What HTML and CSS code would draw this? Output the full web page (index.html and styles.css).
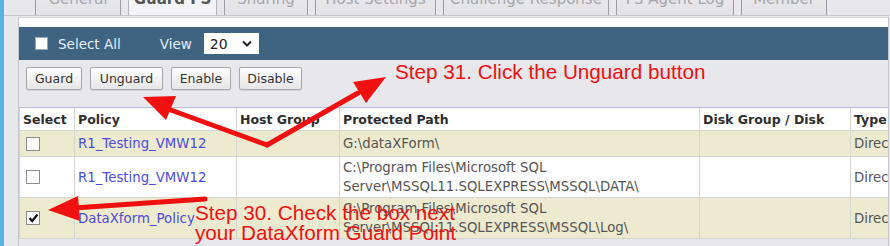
FILE: index.html
```html
<!DOCTYPE html>
<html lang="en">
<head>
    <meta charset="UTF-8">
    <title>Guard FS</title>
    <link rel="stylesheet" href="styles.css">
</head>
<body>
    <div class="frame">
        <div class="edge"></div>

        <div class="content">
            <!-- Tabs -->
            <div class="tabs">
                <div class="tab t-general">General</div>
                <div class="tab t-guard active">Guard FS</div>
                <div class="tab t-sharing">Sharing</div>
                <div class="tab t-host">Host Settings</div>
                <div class="tab t-challenge">Challenge Response</div>
                <div class="tab t-log">FS Agent Log</div>
                <div class="tab t-member">Member</div>
            </div>

            <div class="panel">
                <div class="strip"></div>

                <!-- Header bar -->
                <div class="bar">
                    <label class="select-all"><span class="box"></span>Select All</label>
                    <span class="view-label">View</span>
                    <div class="view-select">
                        <span>20</span>
                        <svg width="10" height="7" viewBox="0 0 10 7"><path d="M1 1.5 L5 5.5 L9 1.5" fill="none" stroke="#222" stroke-width="2"/></svg>
                    </div>
                </div>

                <!-- Buttons -->
                <div class="toolbar">
                    <button class="btn b-guard">Guard</button>
                    <button class="btn b-unguard">Unguard</button>
                    <button class="btn b-enable">Enable</button>
                    <button class="btn b-disable">Disable</button>
                </div>

                <!-- Guard points -->
                <table class="grid">
                    <colgroup>
                        <col class="c-select">
                        <col class="c-policy">
                        <col class="c-host">
                        <col class="c-path">
                        <col class="c-disk">
                        <col class="c-type">
                    </colgroup>
                    <thead>
                        <tr>
                            <th>Select</th>
                            <th>Policy</th>
                            <th>Host Group</th>
                            <th>Protected Path</th>
                            <th>Disk Group / Disk</th>
                            <th>Type</th>
                        </tr>
                    </thead>
                    <tbody>
                        <tr class="odd short">
                            <td><span class="check"></span></td>
                            <td><a href="#">R1_Testing_VMW12</a></td>
                            <td></td>
                            <td>G:\dataXForm\</td>
                            <td></td>
                            <td>Directory</td>
                        </tr>
                        <tr class="even">
                            <td><span class="check"></span></td>
                            <td><a href="#">R1_Testing_VMW12</a></td>
                            <td></td>
                            <td>C:\Program Files\Microsoft SQL<br>Server\MSSQL11.SQLEXPRESS\MSSQL\DATA\</td>
                            <td></td>
                            <td>Directory</td>
                        </tr>
                        <tr class="odd">
                            <td><span class="check checked">
                                <svg width="11" height="10" viewBox="0 0 11 10"><path d="M1.5 5 L4.2 8 L9.5 1.5" fill="none" stroke="#111" stroke-width="2.2"/></svg>
                            </span></td>
                            <td><a href="#">DataXform_Policy</a></td>
                            <td></td>
                            <td>C:\Program Files\Microsoft SQL<br>Server\MSSQL11.SQLEXPRESS\MSSQL\Log\</td>
                            <td></td>
                            <td>Directory</td>
                        </tr>
                    </tbody>
                </table>
            </div>
        </div>

        <!-- Annotations -->
        <svg class="marks" width="890" height="246" viewBox="0 0 890 246">
            <g stroke="#f01010" stroke-width="5" stroke-linecap="round" fill="none">
                <path d="M267 145 L168 109"/>
                <path d="M267 145 L358 93"/>
                <path d="M205 199 L74 208"/>
            </g>
            <g fill="#f01010">
                <polygon points="143,97 176,96 166,120"/>
                <polygon points="386,77 366,103 353,82"/>
                <polygon points="48,210 78,196 80,221"/>
            </g>
        </svg>
        <div class="note note-31">Step 31. Click the Unguard button</div>
        <div class="note note-30">Step 30. Check the box next<br>your DataXform Guard Point</div>
    </div>
</body>
</html>
```

FILE: styles.css
```css
* {
    margin: 0;
    padding: 0;
    box-sizing: border-box;
}

:root {
    --blue-bar: #3e6481;
    --page: #e7e7ec;
    --beige: #eeead0;
    --cell-line: #d4d4d0;
    --text: #555;
    --link: #4c4cdc;
    --red: #f01010;
}

body {
    width: 890px;
    height: 246px;
    overflow: hidden;
    background: var(--page);
    font-family: "DejaVu Sans", Verdana, sans-serif;
}

.frame {
    position: relative;
    display: flex;
    height: 246px;
    overflow: hidden;
}

.edge {
    width: 4px;
    background: #5ab2de;
    flex-shrink: 0;
}

.content {
    flex: 1;
    padding-left: 14px;
    padding-right: 1px;
    min-width: 0;
}

/* Tabs */
.tabs {
    height: 16px;
    overflow: hidden;
    display: flex;
    align-items: flex-end;
    gap: 7px;
    margin-left: -14px;
    padding-left: 31px;
    border-bottom: 1px solid #c6c6cc;
}

.tab {
    height: 26px;
    line-height: 20px;
    font-size: 15px;
    color: #a6a6ac;
    text-align: center;
    border-left: 1px solid #9c9ca4;
    border-right: 1px solid #9c9ca4;
    background: linear-gradient(#ececee, #e2e2e6);
    flex-shrink: 0;
}

.tab.active {
    color: #555;
    font-weight: bold;
    background: #f3f3f5;
    border-color: #b4b4bc;
}

.t-general { width: 86px; }
.t-guard { width: 89px; }
.t-sharing { width: 84px; }
.t-host { width: 121px; }
.t-challenge { width: 166px; }
.t-log { width: 118px; }
.t-member { width: 86px; }

/* Panel */
.panel {
    margin-top: 1px;
    border-left: 1px solid #c4c6d0;
    border-right: 1px solid #c4c6d0;
    height: 229px;
    overflow: hidden;
}

.strip {
    height: 10px;
    background: #fff;
    border-top: 1px solid #d6d6dc;
}

.bar {
    height: 33px;
    background: var(--blue-bar);
    display: flex;
    align-items: center;
    padding-left: 16px;
    color: #e6eef4;
    font-size: 13.5px;
}

.select-all {
    display: flex;
    align-items: center;
    gap: 10px;
}

.box {
    width: 13px;
    height: 13px;
    background: #fff;
    border: 1px solid #9aa;
}

.view-label {
    margin-left: 39px;
}

.view-select {
    margin-left: 12px;
    width: 55px;
    height: 21px;
    background: #fff;
    color: #222;
    display: flex;
    align-items: center;
    justify-content: space-between;
    padding: 0 7px 0 6px;
    font-size: 14px;
}

/* Toolbar */
.toolbar {
    height: 47px;
    display: flex;
    gap: 8px;
    padding: 7px 0 0 7px;
}

.btn {
    height: 23px;
    font-family: "DejaVu Sans", Verdana, sans-serif;
    font-size: 12.5px;
    color: #333;
    background: linear-gradient(#fdfdfd, #e6e6e6);
    border: 1px solid #a8a8a8;
    border-radius: 2px;
    box-shadow: 0 1px 1px rgba(0,0,0,0.08);
}

.b-guard { width: 56px; }
.b-unguard { width: 73px; }
.b-enable { width: 60px; }
.b-disable { width: 63px; }

/* Table */
.grid {
    width: 920px;
    table-layout: fixed;
    border-collapse: collapse;
    font-size: 13.3px;
    color: var(--text);
}

.c-select { width: 55px; }
.c-policy { width: 162px; }
.c-host { width: 103px; }
.c-path { width: 360px; }
.c-disk { width: 151px; }
.c-type { width: 89px; }

.grid th {
    height: 23px;
    text-align: left;
    font-size: 12.5px;
    color: #2e2e2e;
    background: #fff;
    padding: 0 3px;
    border-top: 1px solid #b8b8dc;
    border-left: 1px solid var(--cell-line);
    border-bottom: 1px solid var(--cell-line);
    white-space: nowrap;
}

.grid td {
    height: 41px;
    padding: 0 3px;
    line-height: 19px;
    border: 1px solid var(--cell-line);
    white-space: nowrap;
    overflow: hidden;
}

.grid tr.short td {
    height: 26px;
}

.grid tr.odd td {
    background: var(--beige);
}

.grid tr.even td {
    background: #fff;
}

.grid a {
    color: var(--link);
    text-decoration: none;
}

.check {
    display: flex;
    align-items: center;
    justify-content: center;
    width: 14px;
    height: 14px;
    margin-left: 3px;
    background: #fff;
    border: 1px solid #8c8c8c;
}

/* Annotations */
.marks {
    position: absolute;
    left: 0;
    top: 0;
    pointer-events: none;
}

.note {
    position: absolute;
    font-family: "Liberation Sans", Arial, sans-serif;
    font-size: 20.7px;
    line-height: 19.5px;
    color: var(--red);
    white-space: nowrap;
}

.note-31 {
    left: 395px;
    top: 62px;
}

.note-30 {
    left: 195px;
    top: 203px;
}
```
